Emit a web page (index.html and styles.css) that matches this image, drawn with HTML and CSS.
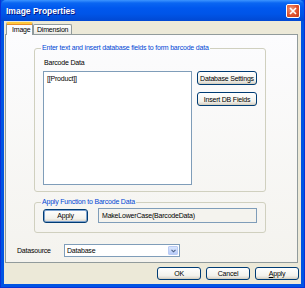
FILE: index.html
```html
<!DOCTYPE html>
<html lang="en">
<head>
  <meta charset="UTF-8">
  <title>Image Properties</title>
  <link rel="stylesheet" href="styles.css">
</head>
<body>
  <div class="window">
    <div class="titlebar">
      <span class="title">Image Properties</span>
      <span class="close-btn">
        <svg width="8" height="8" viewBox="0 0 8 8"><path d="M1 1L7 7M7 1L1 7" stroke="#fff" stroke-width="1.6"/></svg>
      </span>
    </div>
    <div class="client">
      <div class="tabs">
        <div class="tab active">Image</div>
        <div class="tab">Dimension</div>
      </div>
      <div class="panel">
        <fieldset class="group group-data">
          <legend>Enter text and insert database fields to form barcode data</legend>
          <div class="data-row">
            <div class="data-col">
              <div class="field-label">Barcode Data</div>
              <div class="textarea">[[Product]]</div>
            </div>
            <div class="side-buttons">
              <button class="btn">Database Settings</button>
              <button class="btn">Insert DB Fields</button>
            </div>
          </div>
        </fieldset>
        <fieldset class="group group-func">
          <legend>Apply Function to Barcode Data</legend>
          <div class="func-row">
            <button class="btn btn-default btn-apply">Apply</button>
            <div class="textbox">MakeLowerCase(BarcodeData)</div>
          </div>
        </fieldset>
        <div class="source-row">
          <span class="source-label">Datasource</span>
          <div class="combo">
            <span class="combo-text">Database</span>
            <span class="combo-arrow">
              <svg width="5" height="4" viewBox="0 0 5 4"><path d="M0.5 0.8L2.5 2.8L4.5 0.8" fill="none" stroke="#4d6185" stroke-width="1.1"/></svg>
            </span>
          </div>
        </div>
      </div>
      <div class="footer">
        <button class="btn btn-foot">OK</button>
        <button class="btn btn-foot">Cancel</button>
        <button class="btn btn-foot"><u>A</u>pply</button>
      </div>
    </div>
  </div>
</body>
</html>
```

FILE: styles.css
```css
:root {
  --face: #ECE9D8;
  --xp-blue: #0054E3;
  --tab-border: #919B9C;
  --group-border: #D0D0BF;
  --legend: #0046D5;
  --field-border: #7F9DB9;
  --btn-border: #003C74;
}
* { box-sizing: border-box; }
body {
  margin: 0;
  width: 305px; height: 288px;
  font-family: 'Liberation Sans', Arial, sans-serif;
  font-size: 7px;
  letter-spacing: -0.2px;
  color: #000;
  overflow: hidden;
}
.window {
  width: 305px; height: 288px;
  display: flex; flex-direction: column;
  background: var(--xp-blue);
  border: 1px solid #0831D9;
  border-top: none;
  padding: 0 3px 3px;
}
.titlebar {
  height: 21px; margin: 0 -3px;
  display: flex; align-items: center; justify-content: space-between;
  padding: 0 4px 0 5px;
  background: linear-gradient(#3D95FF 0, #0A66F2 3px, #0058EE 8px, #0055E8 14px, #0148D2 21px);
  border-radius: 5px 5px 0 0;
}
.title {
  color: #fff; font-weight: bold; font-size: 8.5px; letter-spacing: 0;
  text-shadow: 1px 1px 0 #0A1883;
}
.close-btn {
  width: 14px; height: 14px;
  display: flex; align-items: center; justify-content: center;
  background: radial-gradient(circle at 35% 35%, #F09B7D 0, #E0512C 55%, #C63A18 100%);
  border: 1px solid #fff; border-radius: 2px;
}
.client {
  flex: 1;
  background: var(--face);
  display: flex; flex-direction: column;
  padding: 1px 0 0 1px;
}
.tabs { display: flex; align-items: flex-end; height: 12px; padding-left: 1px; }
.tab {
  height: 10px; padding: 0 3px;
  display: flex; align-items: center;
  border: 1px solid var(--tab-border); border-bottom: none;
  border-radius: 2px 2px 0 0;
  background: linear-gradient(#fff, #ECEBE5);
}
.tab.active {
  height: 13px; margin-bottom: -1px; padding: 0 5px; width: 27px;
  background: #FCFCFE;
  border-top: 2px solid #FFC83C;
  box-shadow: inset 0 1px 0 #E68B2C;
  position: relative; z-index: 1;
}
.panel {
  width: 293px; height: 229px;
  border: 1px solid var(--tab-border);
  background: linear-gradient(#FCFCFE, #F4F3EE);
  padding: 8px 0 0 28px;
  display: flex; flex-direction: column;
}
.group {
  width: 232px; margin: 0;
  border: 1px solid var(--group-border); border-radius: 3px;
  padding: 0 8px 5px 8px;
}
.group legend {
  color: var(--legend); padding: 0 1px; margin-left: -2px;
  line-height: 10px;
}
.group-data { height: 149px; }
.data-row { display: flex; gap: 5px; }
.data-col { display: flex; flex-direction: column; }
.field-label { height: 9px; line-height: 9px; margin: 5px 0 4px 1px; }
.textarea {
  width: 149px; height: 114px;
  border: 1px solid var(--field-border); background: #fff;
  padding: 2px 3px; line-height: 9px; color: #000;
}
.side-buttons {
  display: flex; flex-direction: column; gap: 7px;
  padding-top: 18px; align-items: flex-start;
}
.btn {
  font-family: inherit; font-size: 7px; letter-spacing: -0.2px; color: #000;
  height: 14px; padding: 0; white-space: nowrap;
  border: 1px solid var(--btn-border); border-radius: 3px;
  background: linear-gradient(#fff, #F3F2EC 70%, #D6D0C5);
  box-shadow: inset 0 -1px 0 #D8D2C2;
}
.side-buttons .btn { width: 60px; }
.group-func { height: 36px; margin-top: 5px; padding-top: 0; }
.func-row { display: flex; align-items: center; gap: 10px; margin-top: 1px; }
.btn-default { box-shadow: inset 0 0 0 1px #7DA2CE, inset 0 -1px 0 #D8D2C2; }
.btn-apply { width: 45px; }
.textbox {
  width: 159px; height: 15px;
  border: 1px solid var(--field-border);
  background: #F4F3EE;
  padding-left: 3px; line-height: 13px;
}
.source-row {
  display: flex; align-items: center;
  margin: 11px 0 0 -17px; height: 13px;
}
.source-label { width: 47px; }
.combo {
  width: 116px; height: 13px;
  display: flex; align-items: stretch;
  border: 1px solid var(--field-border); background: #fff;
}
.combo-text { flex: 1; padding-left: 2px; line-height: 11px; }
.combo-arrow {
  width: 10px; margin: 1px;
  display: flex; align-items: center; justify-content: center;
  background: linear-gradient(#D9E6FE, #B7CBF8);
  border: 1px solid #BACBF4; border-radius: 1px;
}
.footer {
  display: flex; justify-content: flex-end; gap: 5px;
  padding: 4px 2px 0 0;
}
.btn-foot { width: 44px; height: 13px; }
```
